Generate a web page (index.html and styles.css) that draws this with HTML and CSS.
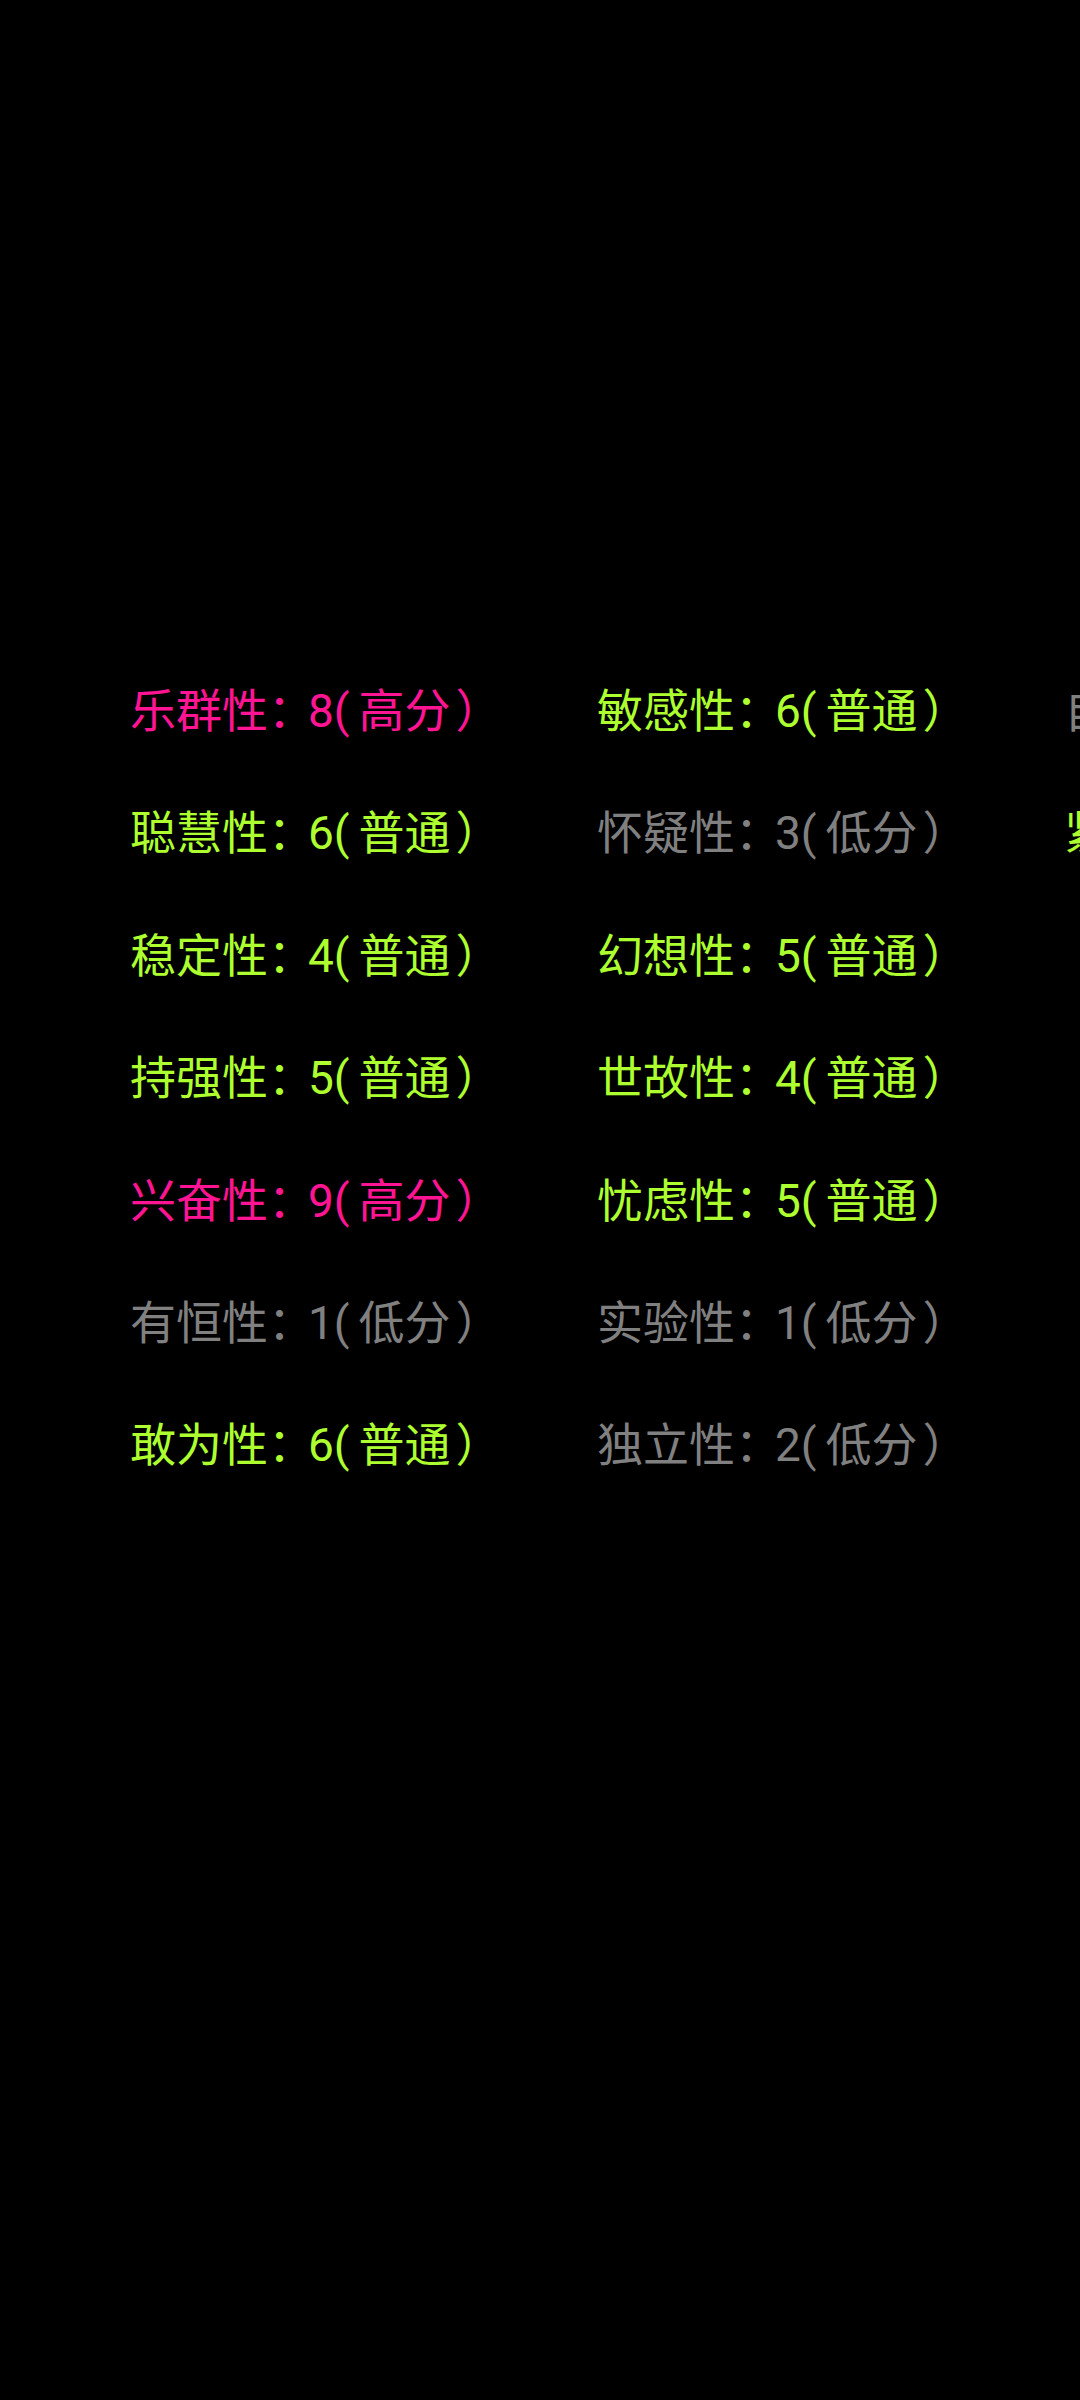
FILE: index.html
```html
<!DOCTYPE html>
<html lang="zh-CN">
<head>
<meta charset="utf-8">
<link rel="stylesheet" href="styles.css">
</head>
<body>
<div class="screen">
  <div class="grid">
    <div class="item high">乐群性<span class="sep">：</span>8(<span class="lvl">高分</span>）</div>
    <div class="item mid">聪慧性<span class="sep">：</span>6(<span class="lvl">普通</span>）</div>
    <div class="item mid">稳定性<span class="sep">：</span>4(<span class="lvl">普通</span>）</div>
    <div class="item mid">持强性<span class="sep">：</span>5(<span class="lvl">普通</span>）</div>
    <div class="item high">兴奋性<span class="sep">：</span>9(<span class="lvl">高分</span>）</div>
    <div class="item low">有恒性<span class="sep">：</span>1(<span class="lvl">低分</span>）</div>
    <div class="item mid">敢为性<span class="sep">：</span>6(<span class="lvl">普通</span>）</div>

    <div class="item mid">敏感性<span class="sep">：</span>6(<span class="lvl">普通</span>）</div>
    <div class="item low">怀疑性<span class="sep">：</span>3(<span class="lvl">低分</span>）</div>
    <div class="item mid">幻想性<span class="sep">：</span>5(<span class="lvl">普通</span>）</div>
    <div class="item mid">世故性<span class="sep">：</span>4(<span class="lvl">普通</span>）</div>
    <div class="item mid">忧虑性<span class="sep">：</span>5(<span class="lvl">普通</span>）</div>
    <div class="item low">实验性<span class="sep">：</span>1(<span class="lvl">低分</span>）</div>
    <div class="item low">独立性<span class="sep">：</span>2(<span class="lvl">低分</span>）</div>

    <div class="item low">自律性<span class="sep">：</span>2(<span class="lvl">低分</span>）</div>
    <div class="item mid">紧张性<span class="sep">：</span>6(<span class="lvl">普通</span>）</div>
  </div>
</div>
</body>
</html>
```
FILE: styles.css
```css
html, body {
  margin: 0;
  padding: 0;
  background: #000;
}
body {
  width: 1080px;
  height: 2400px;
  overflow: hidden;
  font-family: Roboto, "Noto Sans CJK SC", sans-serif;
}
.screen {
  width: 1080px;
  height: 2400px;
  overflow: hidden;
  padding-top: 650px;
  box-sizing: border-box;
}
.grid {
  display: grid;
  grid-template-rows: repeat(7, 122.4px);
  grid-auto-flow: column;
  grid-auto-columns: 467px;
  padding-left: 130px;
  width: max-content;
}
.item {
  font-size: 46px;
  line-height: 122.4px;
  white-space: nowrap;
}
.sep {
  letter-spacing: -6px;
}
.lvl {
  margin-left: 9px;
  margin-right: 5px;
}
.high { color: #ff1493; }
.mid { color: #adff2f; }
.low { color: #808080; }
```
